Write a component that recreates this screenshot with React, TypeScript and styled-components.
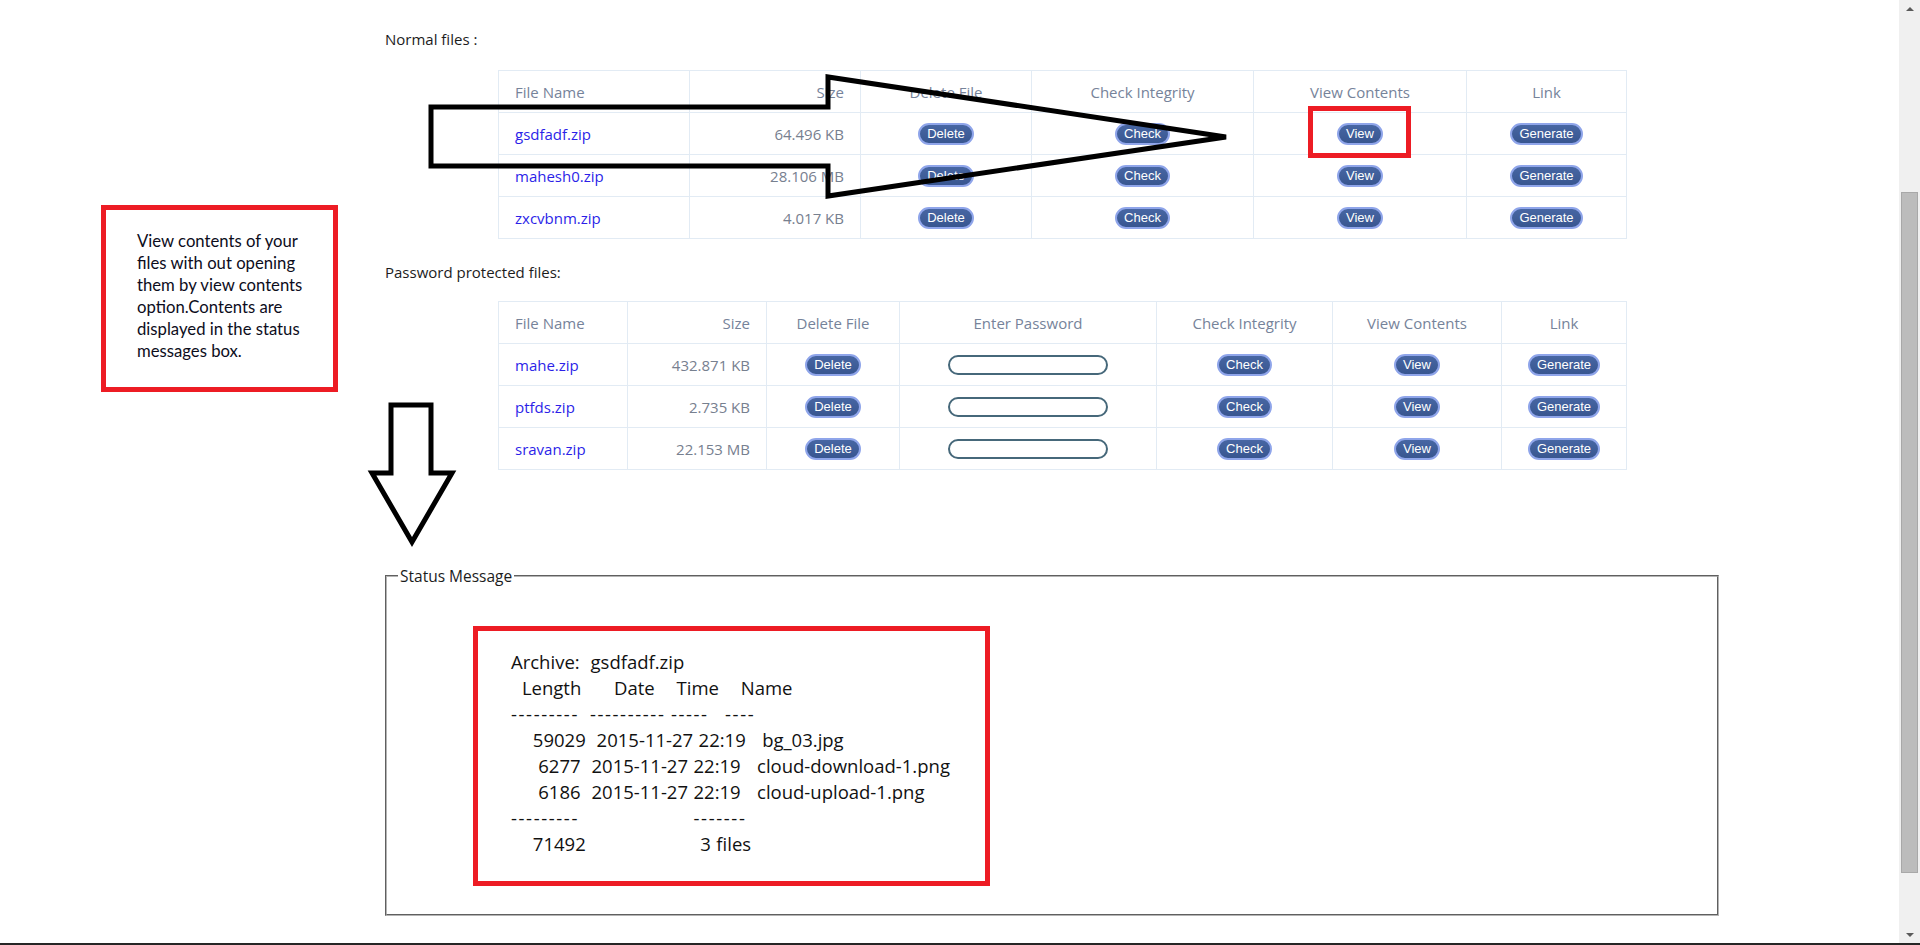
import React from "react";
import styled, { createGlobalStyle } from "styled-components";

const GlobalStyle = createGlobalStyle`
  html, body {
    margin: 0;
    padding: 0;
    height: 100%;
    overflow: hidden;
    background: #ffffff;
  }
  body {
    font-family: "Open Sans", "Noto Sans", sans-serif;
    color: #1f1f1f;
  }
  #root { height: 100%; }
`;

const Screen = styled.div`
  height: 945px;
  display: flex;
  flex-direction: column;
  background: #ffffff;
`;

const Viewport = styled.div`
  flex: 1;
  min-height: 0;
  display: flex;
`;

const Page = styled.main`
  flex: 1;
  position: relative;
  padding: 29px 0 0 385px;
  box-sizing: border-box;
`;

const TaskEdge = styled.div`
  height: 2px;
  background: #262626;
`;

const SectionLabel = styled.div<{ $gap: number }>`
  font-size: 15px;
  line-height: 20px;
  color: #1c1c1c;
  margin-top: ${(p) => p.$gap}px;
`;

const FileTable = styled.table<{ $gap: number }>`
  margin: ${(p) => p.$gap}px 0 0 113px;
  width: 1128px;
  border-collapse: collapse;
  table-layout: fixed;
  font-size: 15px;
`;

const Col = styled.col<{ $w: number }>`
  width: ${(p) => p.$w}px;
`;

const Row = styled.tr`
  height: 42px;
`;

const HeadCell = styled.th<{ $align: string }>`
  padding: 0 16px;
  border: 1px solid #e2ebf4;
  font-weight: 400;
  color: #76839a;
  text-align: ${(p) => p.$align};
  white-space: nowrap;
`;

const Cell = styled.td<{ $align: string; $tone?: "link" | "muted" }>`
  padding: 0 16px;
  border: 1px solid #e2ebf4;
  text-align: ${(p) => p.$align};
  color: ${(p) => (p.$tone === "link" ? "#2c1fe8" : "#77808f")};
  white-space: nowrap;
`;

const ActionButton = styled.button`
  font-family: "Liberation Sans", Arial, sans-serif;
  font-size: 13px;
  line-height: 14px;
  color: #ffffff;
  background: linear-gradient(#4766a3, #385690);
  border: 2px solid #8fa5ea;
  border-radius: 11px;
  padding: 2px 7px;
  cursor: pointer;
`;

const PasswordInput = styled.input`
  box-sizing: border-box;
  width: 160px;
  height: 20px;
  border: 2px solid #46687a;
  border-radius: 10px;
  background: #ffffff;
  padding: 0 8px;
  outline: none;
  vertical-align: middle;
`;

const StatusFieldset = styled.fieldset`
  box-sizing: border-box;
  width: 1334px;
  height: 350px;
  margin: 96px 0 0 0;
  padding: 0 0 0 86px;
  border: 2px groove #b4b4b4;
  min-inline-size: 0;
`;

const StatusLegend = styled.legend`
  font-size: 15.5px;
  line-height: 20px;
  color: #1c1c1c;
  padding: 0 2px;
  margin-left: -75px;
`;

const HighlightBox = styled.div`
  box-sizing: border-box;
  width: 517px;
  margin-top: 40px;
  border: 5px solid #ed1c24;
  padding: 18px 0 24px 33px;
`;

const ListingText = styled.pre`
  margin: 0;
  font-family: "Open Sans", "Noto Sans", sans-serif;
  font-size: 18.5px;
  line-height: 26px;
  color: #111111;
  white-space: pre;
  word-spacing: 0.65px;
`;

const Dashes = styled.span`
  letter-spacing: 1.6px;
`;

const NoteBox = styled.div`
  position: absolute;
  left: 101px;
  top: 205px;
  box-sizing: border-box;
  width: 237px;
  height: 187px;
  border: 5px solid #ed1c24;
  padding: 20px 0 0 31px;
  font-family: Lato, "Open Sans", sans-serif;
  font-size: 16.7px;
  line-height: 22px;
  color: #0d0d1c;
`;

const Overlay = styled.svg`
  position: absolute;
  left: 0;
  top: 0;
  width: 100%;
  height: 100%;
  pointer-events: none;
`;

const ScrollTrack = styled.div`
  width: 21px;
  background: #f0f0f0;
  display: flex;
  flex-direction: column;
  align-items: center;
`;

const ScrollArrow = styled.div<{ $dir: "up" | "down" }>`
  height: 17px;
  width: 100%;
  display: flex;
  align-items: center;
  justify-content: center;
  &::after {
    content: "";
    width: 0;
    height: 0;
    border-left: 4px solid transparent;
    border-right: 4px solid transparent;
    ${(p) =>
      p.$dir === "up"
        ? "border-bottom: 4px solid #5a5a5a;"
        : "border-top: 4px solid #5a5a5a;"}
  }
`;

const ScrollThumb = styled.div`
  box-sizing: border-box;
  width: 17px;
  height: 681px;
  margin-top: 175px;
  background: #bcbcbc;
  border: 1px solid #a8a8a8;
`;

const ScrollSpacer = styled.div`
  flex: 1;
`;

type Column = { title: string; width: number; align: string };

const normalColumns: Column[] = [
  { title: "File Name", width: 191, align: "left" },
  { title: "Size", width: 171, align: "right" },
  { title: "Delete File", width: 171, align: "center" },
  { title: "Check Integrity", width: 222, align: "center" },
  { title: "View Contents", width: 213, align: "center" },
  { title: "Link", width: 160, align: "center" },
];

const protectedColumns: Column[] = [
  { title: "File Name", width: 129, align: "left" },
  { title: "Size", width: 139, align: "right" },
  { title: "Delete File", width: 133, align: "center" },
  { title: "Enter Password", width: 257, align: "center" },
  { title: "Check Integrity", width: 176, align: "center" },
  { title: "View Contents", width: 169, align: "center" },
  { title: "Link", width: 125, align: "center" },
];

const normalFiles = [
  { name: "gsdfadf.zip", size: "64.496 KB" },
  { name: "mahesh0.zip", size: "28.106 MB" },
  { name: "zxcvbnm.zip", size: "4.017 KB" },
];

const protectedFiles = [
  { name: "mahe.zip", size: "432.871 KB" },
  { name: "ptfds.zip", size: "2.735 KB" },
  { name: "sravan.zip", size: "22.153 MB" },
];

function TableHead({ columns }: { columns: Column[] }) {
  return (
    <>
      <colgroup>
        {columns.map((c) => (
          <Col key={c.title} $w={c.width} />
        ))}
      </colgroup>
      <thead>
        <Row>
          {columns.map((c) => (
            <HeadCell key={c.title} $align={c.align}>
              {c.title}
            </HeadCell>
          ))}
        </Row>
      </thead>
    </>
  );
}

function ZipListing() {
  return (
    <ListingText>
      {"Archive:  gsdfadf.zip\n  Length      Date    Time    Name\n"}
      <Dashes>---------</Dashes>
      {"  "}
      <Dashes>----------</Dashes>
      {" "}
      <Dashes>-----</Dashes>
      {"   "}
      <Dashes>----</Dashes>
      {"\n    59029  2015-11-27 22:19   bg_03.jpg\n     6277  2015-11-27 22:19   cloud-download-1.png\n     6186  2015-11-27 22:19   cloud-upload-1.png\n"}
      <Dashes>---------</Dashes>
      {"                     "}
      <Dashes>-------</Dashes>
      {"\n    71492                     3 files"}
    </ListingText>
  );
}

export default function App() {
  return (
    <>
      <GlobalStyle />
      <Screen>
        <Viewport>
          <Page>
            <SectionLabel $gap={0}>Normal files :</SectionLabel>
            <FileTable $gap={21}>
              <TableHead columns={normalColumns} />
              <tbody>
                {normalFiles.map((f) => (
                  <Row key={f.name}>
                    <Cell $align="left" $tone="link">{f.name}</Cell>
                    <Cell $align="right">{f.size}</Cell>
                    <Cell $align="center"><ActionButton>Delete</ActionButton></Cell>
                    <Cell $align="center"><ActionButton>Check</ActionButton></Cell>
                    <Cell $align="center"><ActionButton>View</ActionButton></Cell>
                    <Cell $align="center"><ActionButton>Generate</ActionButton></Cell>
                  </Row>
                ))}
              </tbody>
            </FileTable>

            <SectionLabel $gap={23}>Password protected files:</SectionLabel>
            <FileTable $gap={19}>
              <TableHead columns={protectedColumns} />
              <tbody>
                {protectedFiles.map((f) => (
                  <Row key={f.name}>
                    <Cell $align="left" $tone="link">{f.name}</Cell>
                    <Cell $align="right">{f.size}</Cell>
                    <Cell $align="center"><ActionButton>Delete</ActionButton></Cell>
                    <Cell $align="center"><PasswordInput type="password" /></Cell>
                    <Cell $align="center"><ActionButton>Check</ActionButton></Cell>
                    <Cell $align="center"><ActionButton>View</ActionButton></Cell>
                    <Cell $align="center"><ActionButton>Generate</ActionButton></Cell>
                  </Row>
                ))}
              </tbody>
            </FileTable>

            <StatusFieldset>
              <StatusLegend>Status Message</StatusLegend>
              <HighlightBox>
                <ZipListing />
              </HighlightBox>
            </StatusFieldset>

            <NoteBox>
              View contents of your
              <br />
              files with out opening
              <br />
              them by view contents
              <br />
              option.Contents are
              <br />
              displayed in the status
              <br />
              messages box.
            </NoteBox>

            <Overlay>
              <polygon
                points="431,107 828,107 828,77 1226,137 828,196 828,166 431,166"
                fill="none"
                stroke="#000"
                strokeWidth="5"
                strokeLinejoin="miter"
              />
              <rect
                x="1310.5"
                y="108.5"
                width="98"
                height="47"
                fill="none"
                stroke="#ed1c24"
                strokeWidth="5"
              />
              <polygon
                points="391,405 431,405 431,473 452,473 412,542 372,473 391,473"
                fill="none"
                stroke="#000"
                strokeWidth="5"
                strokeLinejoin="miter"
              />
            </Overlay>
          </Page>
          <ScrollTrack>
            <ScrollArrow $dir="up" />
            <ScrollThumb />
            <ScrollSpacer />
            <ScrollArrow $dir="down" />
          </ScrollTrack>
        </Viewport>
        <TaskEdge />
      </Screen>
    </>
  );
}
